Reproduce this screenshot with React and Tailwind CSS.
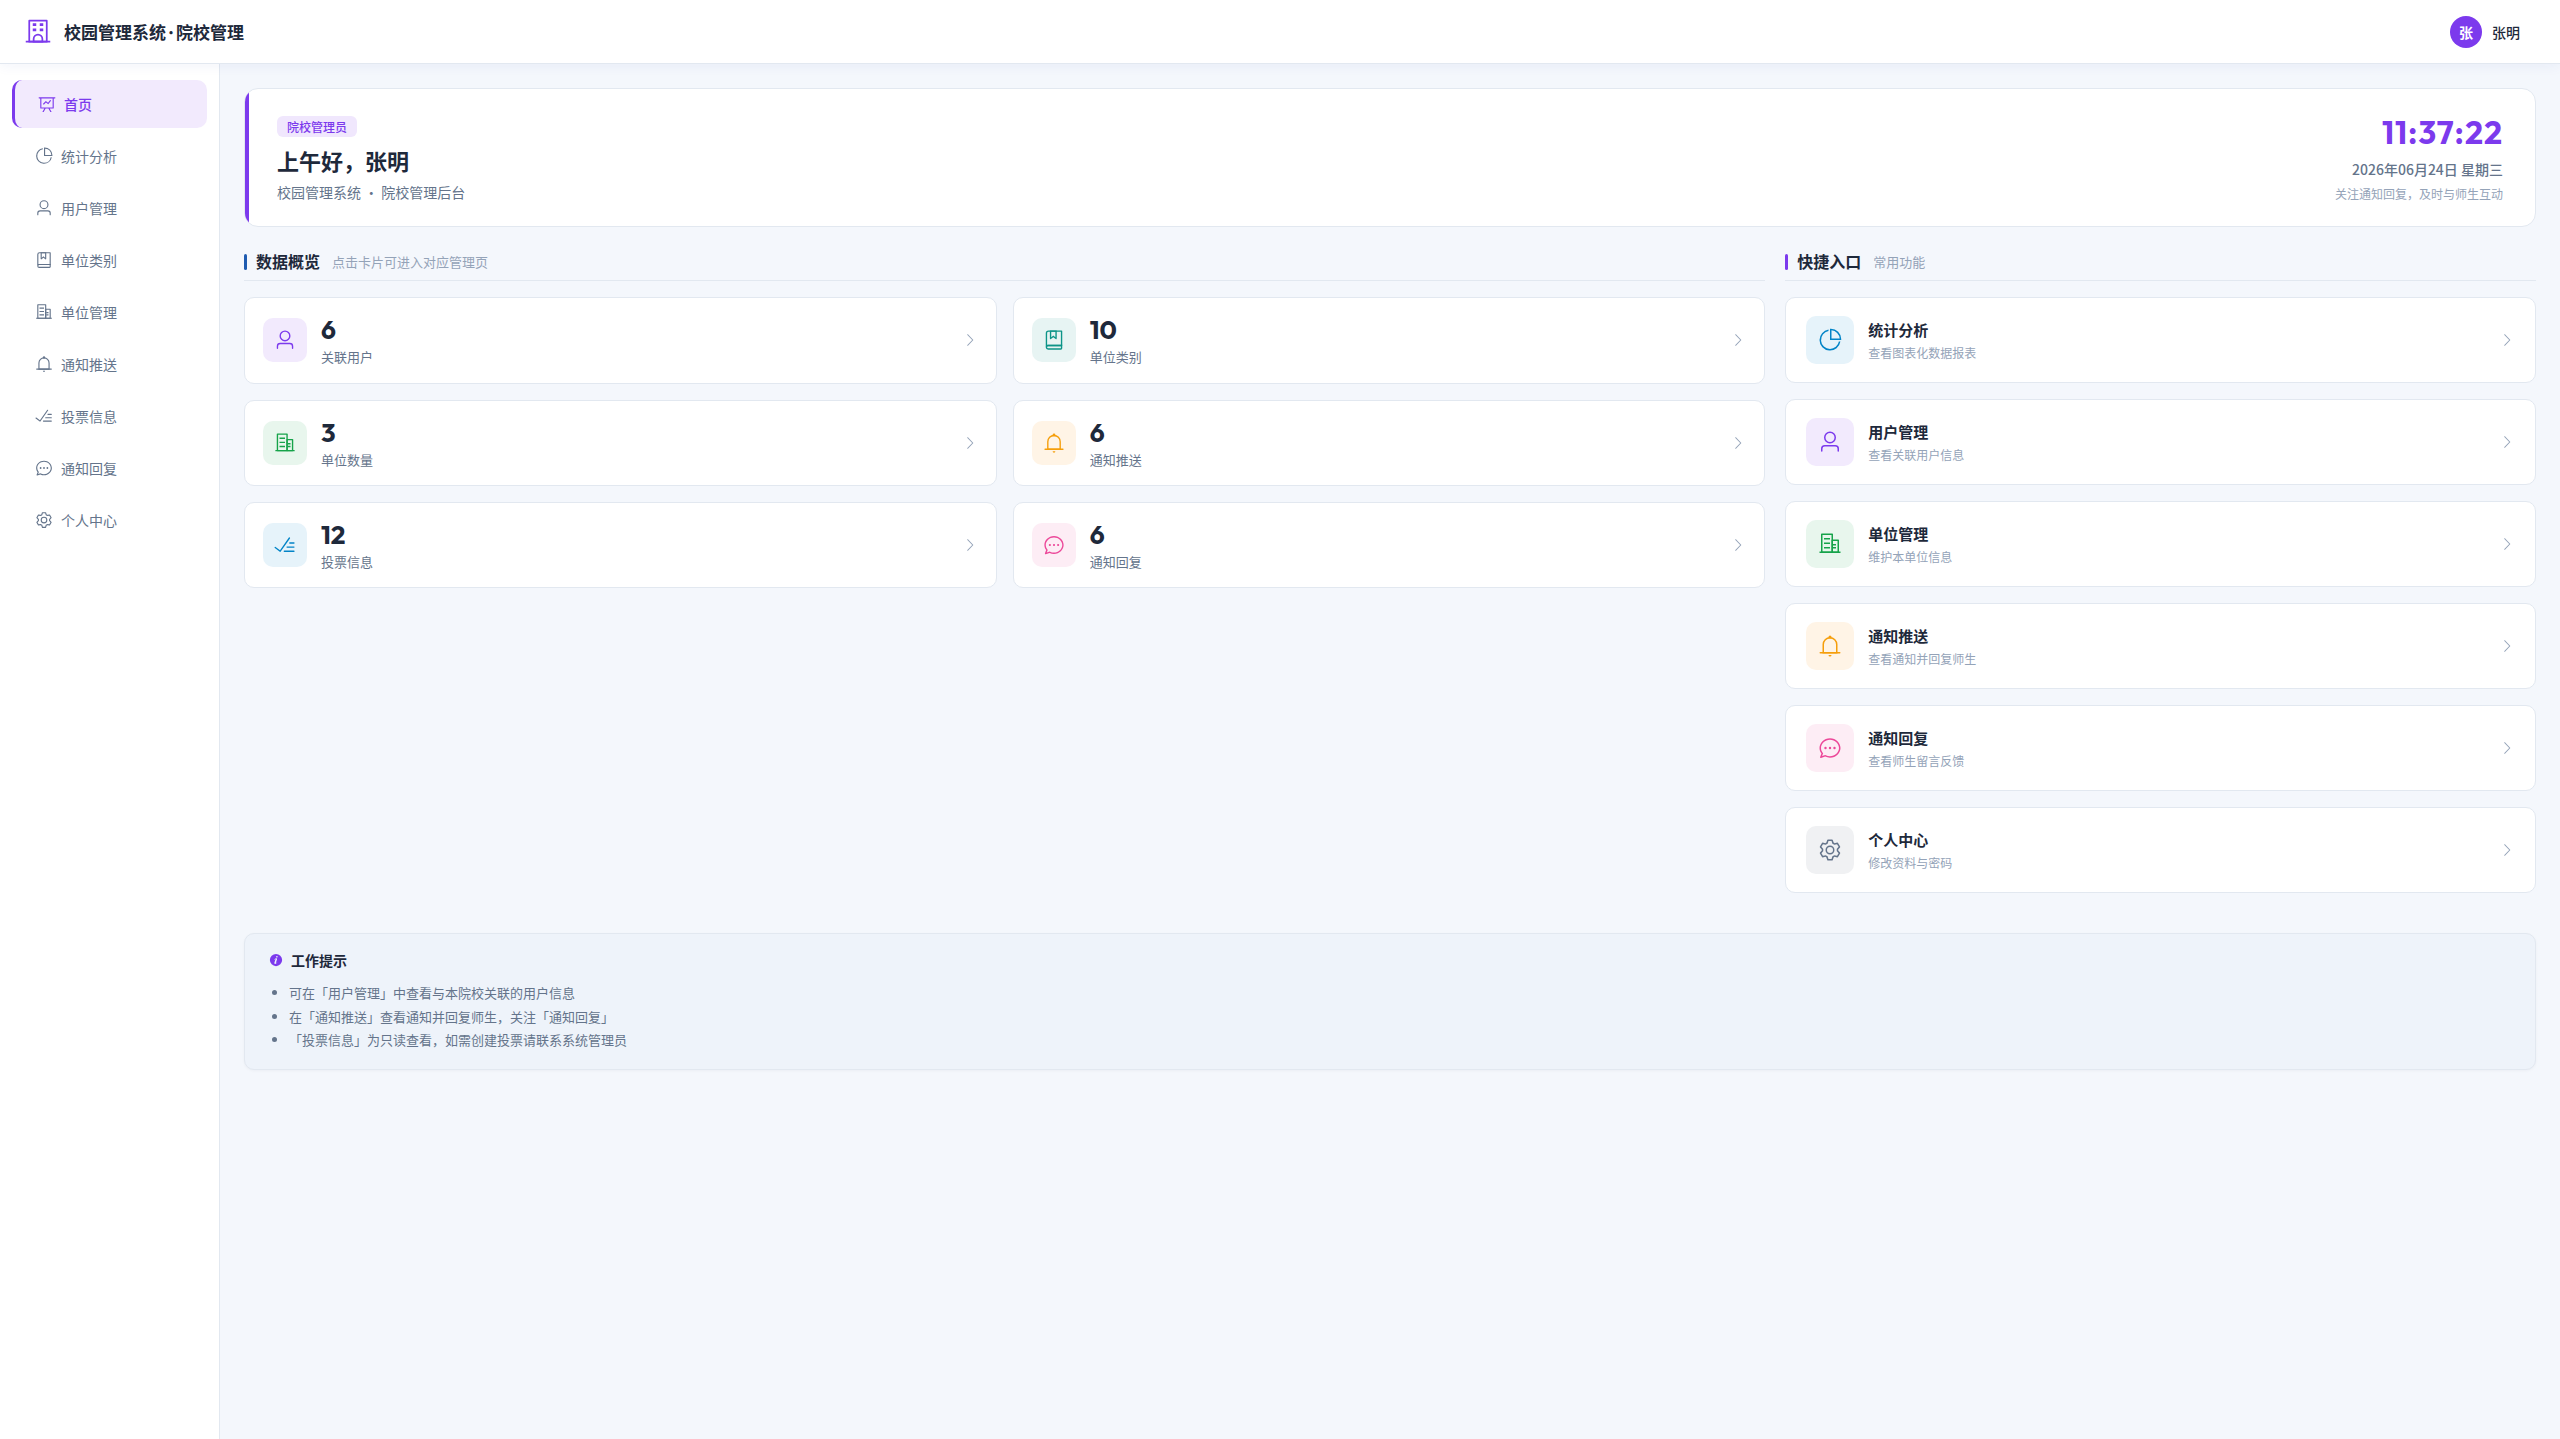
/**
 * App.jsx — 校园管理系统 · 院校管理后台首页
 */

const ICONS = {
  school: [
    'M224 128v704h576V128zm-32-64h640a32 32 0 0 1 32 32v768a32 32 0 0 1-32 32H192a32 32 0 0 1-32-32V96a32 32 0 0 1 32-32',
    'M64 832h896v64H64zm256-640h128v96H320z',
    'M384 832h256v-64a128 128 0 1 0-256 0zm128-256a192 192 0 0 1 192 192v128H320V768a192 192 0 0 1 192-192M320 384h128v96H320zm256-192h128v96H576zm0 192h128v96H576z',
  ],
  dataLine: [
    'M359.168 768H160a32 32 0 0 1-32-32V192H64a32 32 0 0 1 0-64h896a32 32 0 1 1 0 64h-64v544a32 32 0 0 1-32 32H665.216l110.848 192h-73.856L591.36 768H433.024L322.176 960H248.32zM832 192H192v512h640zM342.656 534.656a32 32 0 1 1-45.312-45.312L444.992 341.76l125.44 94.08L679.04 300.032a32 32 0 1 1 49.92 39.936L581.632 524.224 451.008 426.24 342.656 534.592z',
  ],
  pie: [
    'M448 68.48v64.832A384.128 384.128 0 0 0 512 896a384.128 384.128 0 0 0 378.688-320h64.768A448.128 448.128 0 0 1 64 512 448.128 448.128 0 0 1 448 68.48',
    'M576 97.28V448h350.72A384.064 384.064 0 0 0 576 97.28M512 64V33.152A448 448 0 0 1 990.848 512H512z',
  ],
  user: [
    'M512 512a192 192 0 1 0 0-384 192 192 0 0 0 0 384m0 64a256 256 0 1 1 0-512 256 256 0 0 1 0 512m320 320v-96a96 96 0 0 0-96-96H288a96 96 0 0 0-96 96v96a32 32 0 1 1-64 0v-96a160 160 0 0 1 160-160h448a160 160 0 0 1 160 160v96a32 32 0 1 1-64 0',
  ],
  collection: [
    'M192 736h640V128H256a64 64 0 0 0-64 64zm64-672h608a32 32 0 0 1 32 32v672a32 32 0 0 1-32 32H160l-32 57.536V192A128 128 0 0 1 256 64',
    'M240 800a48 48 0 1 0 0 96h592v-96zm0-64h656v160a64 64 0 0 1-64 64H240a112 112 0 0 1 0-224m144-608v250.88l96-76.8 96 76.8V128zm-64-64h320v381.44a32 32 0 0 1-51.968 24.96L480 384l-108.032 86.4A32 32 0 0 1 320 445.44z',
  ],
  office: [
    'M192 128v704h384V128zm-32-64h448a32 32 0 0 1 32 32v768a32 32 0 0 1-32 32H160a32 32 0 0 1-32-32V96a32 32 0 0 1 32-32',
    'M256 256h256v64H256zm0 192h256v64H256zm0 192h256v64H256zm384-128h128v64H640zm0 128h128v64H640zM64 832h896v64H64z',
    'M640 384v448h192V384zm-32-64h256a32 32 0 0 1 32 32v512a32 32 0 0 1-32 32H608a32 32 0 0 1-32-32V352a32 32 0 0 1 32-32',
  ],
  bell: [
    'M512 64a64 64 0 0 1 64 64v64H448v-64a64 64 0 0 1 64-64',
    'M256 768h512V448a256 256 0 1 0-512 0zm256-640a320 320 0 0 1 320 320v384H192V448a320 320 0 0 1 320-320',
    'M96 768h832q32 0 32 32t-32 32H96q-32 0-32-32t32-32m352 128h128a64 64 0 0 1-128 0',
  ],
  finished: [
    'M280.768 753.728 691.456 167.04a32 32 0 1 1 52.416 36.672L314.24 817.472a32 32 0 0 1-45.44 7.296l-230.4-172.8a32 32 0 0 1 38.4-51.2l203.968 152.96zM736 448a32 32 0 1 1 0-64h192a32 32 0 1 1 0 64zM608 640a32 32 0 0 1 0-64h319.936a32 32 0 1 1 0 64zM480 832a32 32 0 1 1 0-64h447.936a32 32 0 1 1 0 64z',
  ],
  chat: [
    'm174.72 855.68 135.296-45.12 23.68 11.84C388.096 849.536 448.576 864 512 864c211.84 0 384-166.784 384-352S723.84 160 512 160 128 326.784 128 512c0 69.12 24.96 139.264 70.848 199.232l22.08 28.8-46.272 115.584zm-45.248 82.56A32 32 0 0 1 89.6 896l58.368-145.92C94.72 680.32 64 596.864 64 512 64 299.904 256 96 512 96s448 203.904 448 416-192 416-448 416a461.056 461.056 0 0 1-206.912-48.384l-175.616 58.56z',
    'M512 563.2a51.2 51.2 0 1 1 0-102.4 51.2 51.2 0 0 1 0 102.4m192 0a51.2 51.2 0 1 1 0-102.4 51.2 51.2 0 0 1 0 102.4m-384 0a51.2 51.2 0 1 1 0-102.4 51.2 51.2 0 0 1 0 102.4',
  ],
  setting: [
    'M600.704 64a32 32 0 0 1 30.464 22.208l35.2 109.376c14.784 7.232 28.928 15.36 42.432 24.512l112.384-24.192a32 32 0 0 1 34.432 15.36L944.32 364.8a32 32 0 0 1-4.032 37.504l-77.12 85.12a357.12 357.12 0 0 1 0 49.024l77.12 85.248a32 32 0 0 1 4.032 37.504l-88.704 153.6a32 32 0 0 1-34.432 15.296L708.8 803.904c-13.44 9.088-27.648 17.28-42.368 24.512l-35.264 109.376A32 32 0 0 1 600.704 960H423.296a32 32 0 0 1-30.464-22.208L357.696 828.48a351.616 351.616 0 0 1-42.56-24.64l-112.32 24.256a32 32 0 0 1-34.432-15.36L79.68 659.2a32 32 0 0 1 4.032-37.504l77.12-85.248a357.12 357.12 0 0 1 0-48.896l-77.12-85.248A32 32 0 0 1 79.68 364.8l88.704-153.6a32 32 0 0 1 34.432-15.296l112.32 24.256c13.568-9.152 27.776-17.408 42.56-24.64l35.2-109.312A32 32 0 0 1 423.232 64H600.64zm-23.424 64H446.72l-36.352 113.088-24.512 11.968a294.113 294.113 0 0 0-34.816 20.096l-22.656 15.36-116.224-25.088-65.28 113.152 79.68 88.192-1.92 27.136a293.12 293.12 0 0 0 0 40.192l1.92 27.136-79.808 88.192 65.344 113.152 116.224-25.024 22.656 15.296a294.113 294.113 0 0 0 34.816 20.096l24.512 11.968L446.72 896h130.688l36.48-113.152 24.448-11.904a288.282 288.282 0 0 0 34.752-20.096l22.592-15.296 116.288 25.024 65.28-113.152-79.744-88.192 1.92-27.136a293.12 293.12 0 0 0 0-40.256l-1.92-27.136 79.808-88.128-65.344-113.152-116.288 24.96-22.592-15.232a287.616 287.616 0 0 0-34.752-20.096l-24.448-11.904L577.344 128zM512 320a192 192 0 1 1 0 384 192 192 0 0 1 0-384m0 64a128 128 0 1 0 0 256 128 128 0 0 0 0-256',
  ],
  arrowRight: [
    'M340.864 149.312a30.592 30.592 0 0 0 0 42.752L652.736 512 340.864 831.872a30.592 30.592 0 0 0 0 42.752 29.12 29.12 0 0 0 41.728 0L714.24 534.336a32 32 0 0 0 0-44.672L382.592 149.376a29.12 29.12 0 0 0-41.728 0z',
  ],
  info: [
    'M512 64a448 448 0 1 1 0 896.064A448 448 0 0 1 512 64m67.2 275.072c33.28 0 60.288-23.104 60.288-57.344s-27.072-57.344-60.288-57.344c-33.28 0-60.16 23.104-60.16 57.344s26.88 57.344 60.16 57.344M590.912 699.2c0-6.848 2.368-24.64 1.024-34.752l-52.608 60.544c-10.88 11.456-24.512 19.392-30.912 17.28a12.992 12.992 0 0 1-8.256-14.72l87.68-276.992c7.168-35.136-12.544-67.2-54.336-71.296-44.096 0-108.992 44.736-148.48 101.504 0 6.784-1.28 23.68.064 33.792l52.544-60.608c10.88-11.328 23.552-19.328 29.952-17.152a12.8 12.8 0 0 1 7.808 16.128L388.48 728.576c-10.048 32.256 8.96 63.872 55.04 71.04 67.84 0 107.904-43.648 147.456-100.416z',
  ],
};

const TONES = {
  purple: 'bg-[#f2eafd] text-[#7c3aed]',
  teal: 'bg-[#e7f4f3] text-[#0d9488]',
  green: 'bg-[#e8f6ed] text-[#16a34a]',
  amber: 'bg-[#fff4e6] text-[#f59e0b]',
  sky: 'bg-[#e6f3fa] text-[#0284c7]',
  pink: 'bg-[#fdedf5] text-[#ec4899]',
  gray: 'bg-[#f0f1f3] text-[#64748b]',
};

const menu = [
  { icon: 'dataLine', label: '首页', active: true },
  { icon: 'pie', label: '统计分析' },
  { icon: 'user', label: '用户管理' },
  { icon: 'collection', label: '单位类别' },
  { icon: 'office', label: '单位管理' },
  { icon: 'bell', label: '通知推送' },
  { icon: 'finished', label: '投票信息' },
  { icon: 'chat', label: '通知回复' },
  { icon: 'setting', label: '个人中心' },
];

const stats = [
  { icon: 'user', tone: 'purple', value: 6, label: '关联用户' },
  { icon: 'collection', tone: 'teal', value: 10, label: '单位类别' },
  { icon: 'office', tone: 'green', value: 3, label: '单位数量' },
  { icon: 'bell', tone: 'amber', value: 6, label: '通知推送' },
  { icon: 'finished', tone: 'sky', value: 12, label: '投票信息' },
  { icon: 'chat', tone: 'pink', value: 6, label: '通知回复' },
];

const shortcuts = [
  { icon: 'pie', tone: 'sky', title: '统计分析', desc: '查看图表化数据报表' },
  { icon: 'user', tone: 'purple', title: '用户管理', desc: '查看关联用户信息' },
  { icon: 'office', tone: 'green', title: '单位管理', desc: '维护本单位信息' },
  { icon: 'bell', tone: 'amber', title: '通知推送', desc: '查看通知并回复师生' },
  { icon: 'chat', tone: 'pink', title: '通知回复', desc: '查看师生留言反馈' },
  { icon: 'setting', tone: 'gray', title: '个人中心', desc: '修改资料与密码' },
];

const tips = [
  '可在「用户管理」中查看与本院校关联的用户信息',
  '在「通知推送」查看通知并回复师生，关注「通知回复」',
  '「投票信息」为只读查看，如需创建投票请联系系统管理员',
];

function Icon({ name, className }) {
  return (
    <svg viewBox="0 0 1024 1024" fill="currentColor" className={`shrink-0 ${className}`}>
      {ICONS[name].map((d) => (
        <path key={d} d={d} />
      ))}
    </svg>
  );
}

function SectionHeader({ title, hint, bar }) {
  return (
    <div className="mb-4 flex h-[30px] items-start border-b border-[#e2e8f0]">
      <span className={`mt-[2.6px] h-4 w-[3px] rounded-[2px] ${bar}`} />
      <div className="ml-[9px] flex items-start gap-3">
        <h2 className="text-base leading-[21px] font-semibold text-[#1e293b]">{title}</h2>
        <span className="text-[13px] leading-[22px] text-[#94a3b8]">{hint}</span>
      </div>
    </div>
  );
}

function Header() {
  return (
    <header className="relative z-10 flex h-16 shrink-0 items-center justify-between border-b border-[#e2e8f0] bg-white pr-10 pl-6 shadow-[0_2px_12px_rgba(30,64,175,0.06)]">
      <div className="flex items-center gap-3">
        <Icon name="school" className="size-7 text-[#7c3aed]" />
        <span className="pt-px text-[17px] leading-6 font-bold text-[#1e293b]">
          校园管理系统<span className="font-['Noto_Sans_CJK_JP',sans-serif]" lang="ja">·</span>院校管理
        </span>
      </div>
      <div className="flex items-center gap-2.5">
        <div className="flex size-8 items-center justify-center rounded-full bg-[#7c3aed] text-sm font-semibold text-white">张</div>
        <span className="text-sm font-medium text-[#1e293b]">张明</span>
      </div>
    </header>
  );
}

function Sidebar() {
  return (
    <aside className="w-[220px] shrink-0 border-r border-[#e2e8f0] bg-white px-3 py-4">
      <nav className="flex flex-col gap-1">
        {menu.map((item) => (
          <a
            key={item.label}
            className={`flex h-12 items-center gap-[5px] rounded-[10px] pl-5 text-sm ${
              item.active ? 'border-l-[3px] border-[#7c3aed] bg-[#f2eafd] font-medium text-[#7c3aed]' : 'text-[#64748b]'
            }`}
          >
            <span className="flex w-6 justify-center">
              <Icon name={item.icon} className="size-[18px]" />
            </span>
            {item.label}
          </a>
        ))}
      </nav>
    </aside>
  );
}

function Welcome() {
  return (
    <section className="mb-6 flex h-[139.4px] overflow-hidden rounded-[14px] border border-[#e2e8f0] bg-white">
      <div className="w-1 bg-[#7c3aed]" />
      <div className="flex flex-1 items-start justify-between pr-8 pl-7">
        <div className="flex flex-col items-start pt-[27px]">
          <span className="rounded-md bg-[#f0e7fd] px-2.5 text-xs leading-[21px] font-medium text-[#7c3aed]">院校管理员</span>
          <h1 className="mt-2 text-[22px] leading-[31px] font-bold text-[#1e293b]">上午好，张明</h1>
          <p className="mt-[5px] text-sm leading-[22px] text-[#64748b]">校园管理系统 · 院校管理后台</p>
        </div>
        <div className="flex flex-col items-end pt-6">
          <div className="font-['Outfit','Lato',sans-serif] text-[32px] leading-[38px] font-bold tracking-[1px] text-[#7c3aed]">11:37:22</div>
          <p className="mt-[7px] text-sm leading-[22px] font-medium text-[#64748b]">2026年06月24日 星期三</p>
          <p className="mt-1 text-xs leading-[19px] text-[#94a3b8]">关注通知回复，及时与师生互动</p>
        </div>
      </div>
    </section>
  );
}

function StatCard({ icon, tone, value, label }) {
  return (
    <div className="flex h-[86.2px] items-center rounded-[10px] border border-[#e2e8f0] bg-white px-[18px]">
      <div className={`flex size-11 items-center justify-center rounded-[10px] ${TONES[tone]}`}>
        <Icon name={icon} className="size-[22px]" />
      </div>
      <div className="ml-3.5 flex-1 pt-0.5">
        <div className="font-['Outfit','Lato',sans-serif] text-[26px] leading-[29px] font-bold text-[#1e293b]">{value}</div>
        <div className="mt-[3px] text-[13px] leading-5 text-[#64748b]">{label}</div>
      </div>
      <Icon name="arrowRight" className="size-4 text-[#94a3b8]" />
    </div>
  );
}

function ShortcutCard({ icon, tone, title, desc }) {
  return (
    <div className="flex h-[86px] items-center rounded-[10px] border border-[#e2e8f0] bg-white px-5">
      <div className={`flex size-12 items-center justify-center rounded-[10px] ${TONES[tone]}`}>
        <Icon name={icon} className="size-6" />
      </div>
      <div className="ml-3.5 flex-1 pt-px">
        <div className="text-[15px] leading-[22px] font-semibold text-[#1e293b]">{title}</div>
        <div className="mt-0.5 text-xs leading-5 text-[#94a3b8]">{desc}</div>
      </div>
      <Icon name="arrowRight" className="size-4 text-[#94a3b8]" />
    </div>
  );
}

export default function App() {
  return (
    <div lang="zh-CN" className="flex h-screen flex-col bg-[#f4f7fc] font-['Noto_Sans_CJK_SC',sans-serif]">
      <Header />
      <div className="flex min-h-0 flex-1">
        <Sidebar />
        <main className="flex-1 p-6">
          <Welcome />

          {/* 数据概览 + 快捷入口 */}
          <div className="mb-10 grid grid-cols-[1521.33fr_750.67fr] items-start gap-5">
            <section>
              <SectionHeader title="数据概览" hint="点击卡片可进入对应管理页" bar="bg-[#1e5bb0]" />
              <div className="grid grid-cols-2 gap-4">
                {stats.map((s) => (
                  <StatCard key={s.label} {...s} />
                ))}
              </div>
            </section>
            <section>
              <SectionHeader title="快捷入口" hint="常用功能" bar="bg-[#7c3aed]" />
              <div className="flex flex-col gap-4">
                {shortcuts.map((s) => (
                  <ShortcutCard key={s.title} {...s} />
                ))}
              </div>
            </section>
          </div>

          {/* 工作提示 */}
          <section className="h-[137px] rounded-[10px] border border-[#e2e8f0] bg-[#eef3fa] px-6 pt-[15px] shadow-[0_1px_3px_rgba(15,23,42,0.04)]">
            <div className="mb-2.5 flex items-center gap-2">
              <Icon name="info" className="size-3.5 text-[#7c3aed]" />
              <h3 className="text-sm leading-[22px] font-semibold text-[#1e293b]">工作提示</h3>
            </div>
            <ul className="list-disc pl-5 text-[13px] leading-[23.4px] text-[#64748b]">
              {tips.map((t) => (
                <li key={t}>{t}</li>
              ))}
            </ul>
          </section>
        </main>
      </div>
    </div>
  );
}
